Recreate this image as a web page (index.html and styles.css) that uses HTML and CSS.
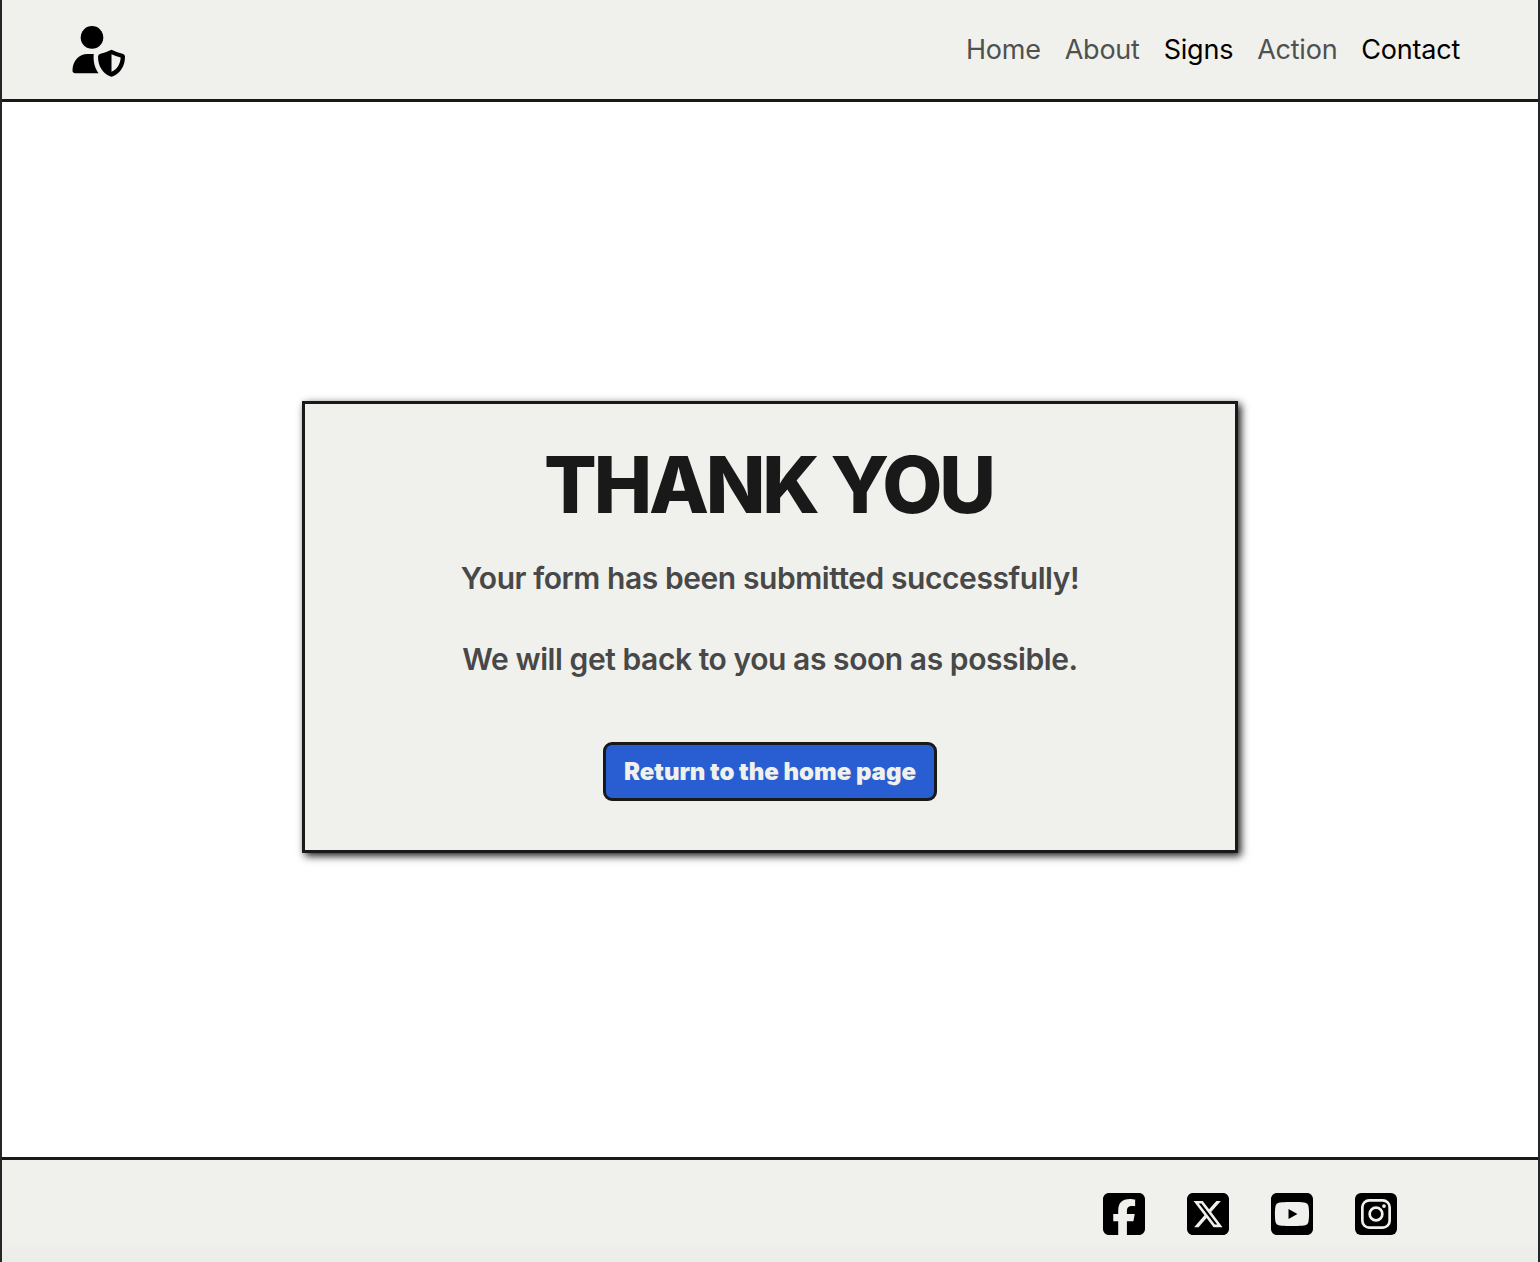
FILE: index.html
```html
<!DOCTYPE html>
<html lang="en">
<head>
<meta charset="utf-8">
<title>Thank you</title>
<link rel="stylesheet" href="styles.css">
</head>
<body>
<header class="header">
  <a class="logo" aria-label="Home">
    <svg viewBox="0 0 54 52" width="54" height="52">
      <circle cx="20" cy="11.4" r="11.3"/>
      <path d="M15.5 28H21.7C21.2 35.5 22.6 42 26.6 47.3H3.2Q.5 47.3.5 44.6C.5 35 6.800 28 15.500 28Z"/>
      <path fill-rule="evenodd" d="M38.300 24.200Q39.500 23.500 40.700 24.200Q45 26.400 50.500 27.700Q53 28.200 53 30.500C53 40 48.300 47.300 41 50.300Q39.500 51 38 50.300C30.700 47.300 26 40 26 30.500Q26 28.200 28.500 27.700Q34 26.400 38.300 24.200ZM39.500 28.300V45.800C45.200 43.500 48.200 38.200 48.700 31.500Q43.500 30.400 39.500 28.300Z"/>
    </svg>
  </a>
  <nav class="nav">
    <a class="link">Home</a>
    <a class="link">About</a>
    <a class="link link-active">Signs</a>
    <a class="link">Action</a>
    <a class="link link-active">Contact</a>
  </nav>
</header>
<main class="main">
  <section class="card">
    <h1 class="title">THANK YOU</h1>
    <p class="message">Your form has been submitted successfully!</p>
    <p class="message">We will get back to you as soon as possible.</p>
    <a class="button">Return to the home page</a>
  </section>
</main>
<footer class="footer">
  <svg class="social" viewBox="0 32 448 448"><path d="M64 32C28.700 32 0 60.700 0 96V416c0 35.300 28.700 64 64 64h98.200V334.200H109.400V256h52.800V222.300c0-87.100 39.400-127.500 125-127.500c16.200 0 44.200 3.200 55.700 6.400V172c-6-.6-16.500-1-29.600-1c-42 0-58.200 15.900-58.200 57.200V256h83.600l-14.400 78.200H255V480H384c35.300 0 64-28.700 64-64V96c0-35.300-28.700-64-64-64H64z"/></svg>
  <svg class="social" viewBox="0 32 448 448"><path d="M64 32C28.700 32 0 60.700 0 96V416c0 35.300 28.700 64 64 64H384c35.300 0 64-28.700 64-64V96c0-35.300-28.700-64-64-64H64zm297.100 84L257.300 234.600 379.400 396H283.800L209 298.100 123.300 396H75.800l111-126.900L69.700 116h98l67.700 89.500L313.600 116h47.500zM323.300 367.600L153.400 142.900H125.100L296.900 367.600h26.300z"/></svg>
  <svg class="social" viewBox="0 32 448 448"><path d="M282 256.200l-95.200-54.100V310.300L282 256.200zM384 32H64C28.700 32 0 60.700 0 96V416c0 35.300 28.700 64 64 64H384c35.300 0 64-28.700 64-64V96c0-35.300-28.700-64-64-64zm14.400 136.100c7.600 28.600 7.600 88.200 7.600 88.200s0 59.600-7.600 88.100c-4.200 15.800-16.500 27.700-32.200 31.900C337.900 384 224 384 224 384s-113.900 0-142.200-7.600c-15.700-4.200-28-16.100-32.200-31.900C42 315.900 42 256.300 42 256.300s0-59.700 7.600-88.200c4.200-15.800 16.500-28.200 32.200-32.400C110.100 128 224 128 224 128s113.900 0 142.200 7.700c15.700 4.200 28 16.600 32.200 32.400z"/></svg>
  <svg class="social" viewBox="0 0 42 42"><rect width="42" height="42" rx="6"/><g class="camera"><rect x="7.350" y="7.350" width="27.300" height="27.300" rx="7"/><circle cx="21" cy="21" r="6.350"/></g><circle class="camera-dot" cx="29" cy="13.100" r="1.850"/></svg>
</footer>
</body>
</html>
```
FILE: styles.css
```css
* { box-sizing: border-box; }

body {
  margin: 0;
  height: 1262px;
  display: flex;
  flex-direction: column;
  border: solid #252627;
  border-width: 0 2px;
  background: #fff;
  font-family: Inter, "Liberation Sans", sans-serif;
  color: #191919;
  overflow: hidden;
}

.header {
  height: 102px;
  flex: none;
  display: flex;
  align-items: center;
  justify-content: space-between;
  padding: 0 78px 0 70px;
  background: #f0f1ec;
  border-bottom: 3px solid #191919;
}

.logo { display: flex; padding-top: 4px; }

.nav { display: flex; gap: 24px; }

.link {
  font-size: 27px;
  line-height: 34px;
  font-weight: 400;
  letter-spacing: -0.23px;
  color: #505050;
}

.link-active { color: #000; }

.main {
  flex: 1;
  display: flex;
  justify-content: center;
  padding-top: 299px;
}

.card {
  width: 936px;
  height: 452px;
  display: flex;
  flex-direction: column;
  align-items: center;
  padding-top: 32px;
  background: #f0f1ec;
  border: 3px solid #191919;
  box-shadow: 3px 3px 8px #191919;
}

.title {
  margin: 0;
  padding-right: 3px;
  font-size: 78px;
  line-height: 98px;
  font-weight: 800;
  letter-spacing: -3.2px;
}

.message {
  margin: 26px 0 0;
  font-size: 30px;
  line-height: 37px;
  font-weight: 600;
  letter-spacing: -0.43px;
  color: #484848;
}

.message + .message { margin-top: 44px; }

.button {
  width: 334px;
  height: 59px;
  margin-top: 64px;
  display: flex;
  align-items: center;
  justify-content: center;
  border: 3px solid #191919;
  border-radius: 9px;
  background: #295dd2;
  color: #f0f1ec;
  font-size: 24px;
  font-weight: 900;
  letter-spacing: -0.04px;
  white-space: nowrap;
}

.footer {
  height: 105px;
  flex: none;
  display: flex;
  justify-content: flex-end;
  gap: 42px;
  padding: 33px 141px 0 0;
  background: linear-gradient(#f0f1ec 75%, #ecede8);
  border-top: 3px solid #191919;
}

.social { width: 42px; height: 42px; }

.camera { fill: none; stroke: #f0f1ec; stroke-width: 2.7; }

.camera-dot { fill: #f0f1ec; }
```
